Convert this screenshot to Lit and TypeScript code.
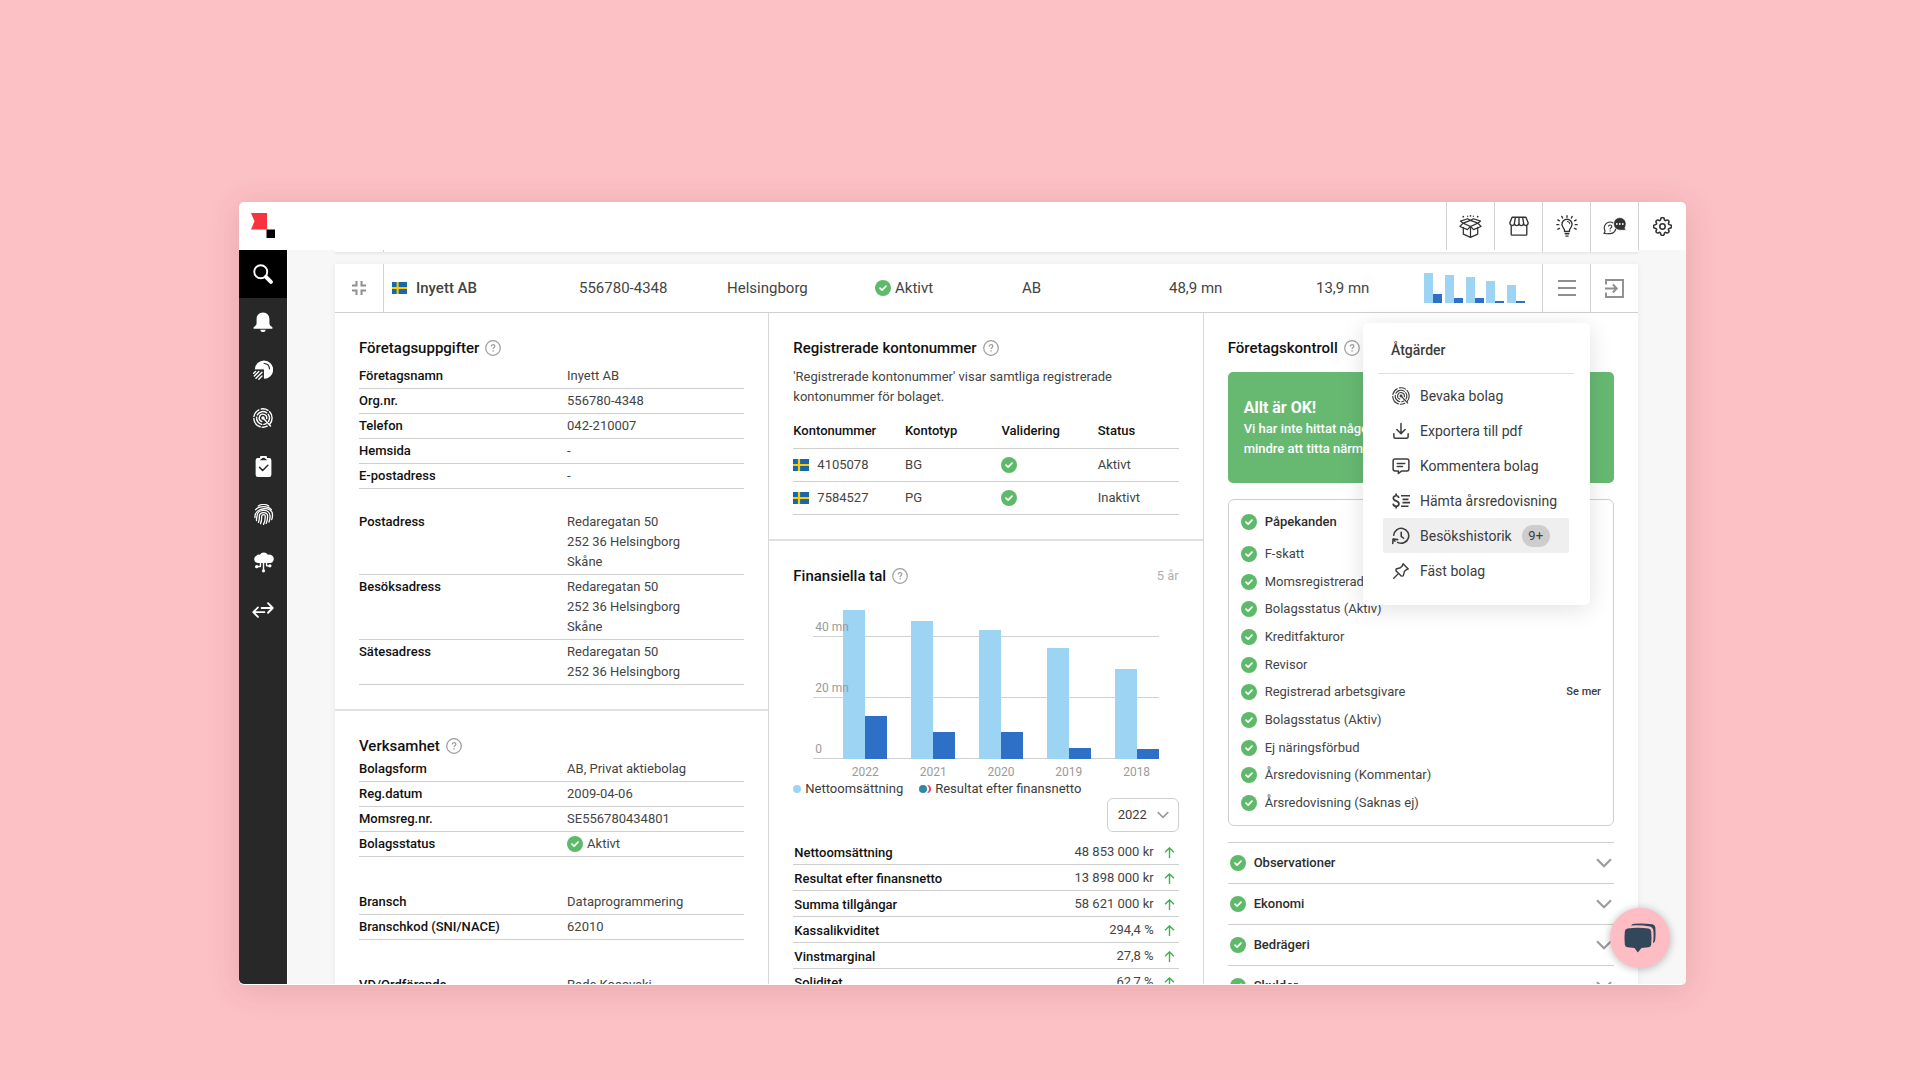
import { LitElement, html, css, svg, nothing, type TemplateResult } from "lit";
import { customElement, state } from "lit/decorators.js";
import { classMap } from "lit/directives/class-map.js";
import { styleMap } from "lit/directives/style-map.js";

/* ---------- data ---------- */

interface Year {
  year: number;
  revenue: number;
  result: number;
}

const YEARS: Year[] = [
  { year: 2022, revenue: 48.85, result: 13.9 },
  { year: 2021, revenue: 45.2, result: 8.6 },
  { year: 2020, revenue: 42.2, result: 8.8 },
  { year: 2019, revenue: 36.4, result: 3.5 },
  { year: 2018, revenue: 29.4, result: 3.2 },
];

const CHART_MAX = 52.5;
const TICKS = [
  { value: 40, label: "40 mn" },
  { value: 20, label: "20 mn" },
  { value: 0, label: "0" },
];

const COMPANY: [string, string][] = [
  ["Företagsnamn", "Inyett AB"],
  ["Org.nr.", "556780-4348"],
  ["Telefon", "042-210007"],
  ["Hemsida", "-"],
  ["E-postadress", "-"],
];

const ADDRESSES: [string, string[]][] = [
  ["Postadress", ["Redaregatan 50", "252 36 Helsingborg", "Skåne"]],
  ["Besöksadress", ["Redaregatan 50", "252 36 Helsingborg", "Skåne"]],
  ["Sätesadress", ["Redaregatan 50", "252 36 Helsingborg"]],
];

const ACCOUNTS = [
  { number: "4105078", type: "BG", status: "Aktivt" },
  { number: "7584527", type: "PG", status: "Inaktivt" },
];

const FIGURES: [string, string][] = [
  ["Nettoomsättning", "48 853 000 kr"],
  ["Resultat efter finansnetto", "13 898 000 kr"],
  ["Summa tillgångar", "58 621 000 kr"],
  ["Kassalikviditet", "294,4 %"],
  ["Vinstmarginal", "27,8 %"],
  ["Soliditet", "62,7 %"],
];

const CHECKS: { text: string; more?: boolean }[] = [
  { text: "F-skatt" },
  { text: "Momsregistrerad" },
  { text: "Bolagsstatus (Aktiv)" },
  { text: "Kreditfakturor" },
  { text: "Revisor" },
  { text: "Registrerad arbetsgivare", more: true },
  { text: "Bolagsstatus (Aktiv)" },
  { text: "Ej näringsförbud" },
  { text: "Årsredovisning (Kommentar)" },
  { text: "Årsredovisning (Saknas ej)" },
];

const SECTIONS = ["Observationer", "Ekonomi", "Bedrägeri", "Skulder"];

/* ---------- icons ---------- */

const icon = (size: number, body: TemplateResult, w = 24, h = 24) => html`<svg
  class="icon"
  width=${size}
  height=${Math.round((size * h) / w)}
  viewBox="0 0 ${w} ${h}"
  fill="none"
  stroke="currentColor"
  stroke-width="1.8"
  stroke-linecap="round"
  stroke-linejoin="round"
  aria-hidden="true"
>
  ${body}
</svg>`;

const logo = html`<svg width="24" height="25" viewBox="0 0 24 25" aria-hidden="true">
  <path d="M0 0H16V16.500H0L3.500 8.200Z" fill="#f8323f" />
  <rect x="15.500" y="16.500" width="8.500" height="8.500" fill="#000" />
</svg>`;

const check = html`<svg class="icon" width="16" height="16" viewBox="0 0 16 16" aria-hidden="true">
  <circle cx="8" cy="8" r="8" fill="#5fb96b" />
  <path d="M5 8.200L7.100 10.200L11 6.200" fill="none" stroke="#fff" stroke-width="1.700" stroke-linecap="round" stroke-linejoin="round" />
</svg>`;

const help = html`<svg class="icon" width="16" height="16" viewBox="0 0 16 16" fill="none" stroke="#9b9b9b" aria-hidden="true">
  <circle cx="8" cy="8" r="7.300" stroke-width="1.200" />
  <path d="M6.200 6.600C6.200 5.400 7 4.700 8 4.700C9.100 4.700 9.900 5.400 9.900 6.300C9.900 7.500 8.100 7.600 8.100 9.100" stroke-width="1.200" />
  <path d="M8.100 10.300V11.600" stroke-width="1.300" />
</svg>`;

const flag = (w: number) => html`<svg class="icon" width=${w} height="12" viewBox="0 0 16 12" preserveAspectRatio="none" role="img" aria-label="Sverige">
  <rect width="16" height="12" fill="#1668a8" />
  <path d="M0 6H16M6 0V12" stroke="#fdcb0a" stroke-width="2.200" fill="none" />
</svg>`;

const chevron = (w: number) => html`<svg class="icon" width=${w} height=${Math.round(w / 1.6)} viewBox="0 0 16 10" fill="none" stroke="#9c9c9c" stroke-width="2.200" aria-hidden="true">
  <path d="M1 1.200L8 8.200L15 1.200" />
</svg>`;

const arrowUp = html`<svg class="icon" width="11" height="11" viewBox="0 0 11 11" fill="none" stroke="#3fb24f" stroke-width="1.400" aria-hidden="true">
  <path d="M5.500 11V1M1 5.300L5.500 0.900L10 5.300" />
</svg>`;

const targetBody = (w: number) => svg`
  <g stroke-width=${w}>
    <path d="M7 2.300A11 11 0 0 0 1.100 10M1 12.500A11 11 0 0 0 8.500 22.500M11 23A11 11 0 0 0 17 21.800M10 1.200A11 11 0 0 1 18 2.800M20 4.600A11 11 0 0 1 20 19.500" />
    <path d="M16.500 5.800A7.700 7.700 0 0 0 5.200 8.300M4.300 11A7.700 7.700 0 0 0 10.500 19.600M13 19.600A7.700 7.700 0 0 0 15.800 18.700M18.300 7.600A7.700 7.700 0 0 1 18.600 16" />
    <path d="M10.500 16.200A4.500 4.500 0 1 1 16.400 12.800" />
    <path d="M12 12L21 21.600" />
    <circle cx="12" cy="12" r="1.200" />
  </g>`;

const icons = {
  search: icon(20, svg`<circle cx="9.300" cy="9.300" r="7.800" stroke-width="2.300" /><path d="M15.500 15.500L21.500 21.500" stroke-width="4.600" />`),
  bell: icon(20, svg`<g fill="currentColor" stroke="none">
    <path d="M12 0.500C7 0.500 4.300 4 4.300 8.700V13.500C4.300 15.500 3 16.800 0.700 18.300V20H23.300V18.300C21 16.800 19.700 15.500 19.700 13.500V8.700C19.700 4 17 0.500 12 0.500Z" />
    <path d="M8.800 21.200H15.200C15 22.900 13.700 24 12 24S9 22.900 8.800 21.200Z" /></g>`),
  pie: icon(20, svg`<g stroke="none"><path d="M2.200 11.500A11 11 0 1 1 13 22.500V11.500Z" fill="currentColor" /></g>
    <path d="M13.500 4.200C17 4.400 19.600 7 19.800 10.500" stroke="#282828" stroke-width="1.500" />
    <path d="M0 12.300H12.200V24" stroke="#282828" stroke-width="1.400" stroke-linejoin="miter" />
    <path d="M0.800 16L3 13.900M1.600 19.200L7 13.900M3.600 21.900L10.800 14.800M7 23.200L10.800 19.300" stroke-width="1.700" />`),
  target: icon(20, targetBody(1.700)),
  clipboard: icon(21, svg`<path d="M5.500 2.300H8A4 4 0 0 1 16 2.300H18.500A2.500 2.500 0 0 1 21 4.800V21.500A2.500 2.500 0 0 1 18.500 24H5.500A2.500 2.500 0 0 1 3 21.500V4.800A2.500 2.500 0 0 1 5.500 2.300Z" fill="currentColor" stroke="none" />
    <path d="M8 4.800H16C15.800 3.500 14.500 3.400 14 3C13.500 1.700 10.500 1.700 10 3C9.500 3.400 8.200 3.500 8 4.800Z" fill="#282828" stroke="none" />
    <path d="M7.500 13L11 16.500L17 10.500" stroke="#282828" stroke-width="1.700" />`),
  fingerprint: icon(21, svg`<g stroke-width="1.500">
    <path d="M6 2.300C9.500 0.200 14.500 0.200 18 2.300" />
    <path d="M3 6.500C7 1.900 17 1.900 21 6.500" />
    <path d="M2.300 15.500C0.800 3.500 23.200 1.500 22.300 13C22.200 15 22 16.500 21.400 17.800" />
    <path d="M4 19C3.600 17.500 4.500 16 4.600 13.500C5 5.300 19.300 5 19.500 13.500C19.500 16.500 19 18.800 18.300 20.600" />
    <path d="M6.200 21C7.500 18.500 7.300 16 7.300 13.500C7.700 8.500 16.500 8.500 16.700 13.500C16.800 17 16.300 19.800 15 22.300" />
    <path d="M8.600 22.500C10 19.500 10 16.500 10 13.800C10.200 11.600 13.900 11.600 14 13.800C14.100 17.300 13.500 20.500 12 23.300" /></g>`),
  cloud: icon(21, svg`<path d="M5 12.500A4.300 4.300 0 0 1 3.800 4.400A4 4 0 0 1 7.800 3A5.600 5.600 0 0 1 17 3.200A4.700 4.700 0 0 1 20.500 12.500Z" fill="currentColor" stroke="none" />
    <path d="M12 12V21M8.500 12V16.500H5M15.500 12V15.800H19" stroke-width="1.600" />
    <g fill="currentColor" stroke="none"><circle cx="12" cy="21.500" r="1.800" /><circle cx="4.200" cy="16.800" r="1.900" /><circle cx="19.300" cy="15.800" r="1.900" /></g>`),
  swap: icon(22, svg`<g stroke-width="2"><path d="M10.500 9.800H22.500M17.500 4.600L22.600 9.800L17.500 15" /><path d="M13.500 14.400H1.500M6.500 9.200L1.400 14.400L6.500 19.600" /></g>`),
  box: icon(23, svg`<g stroke-width="1.300">
    <path d="M4.500 12.800V20L12 23.300L19.500 20V12.800M12 13.300V23" />
    <path d="M4.300 8.500L12 5.600L19.700 8.500L12 12L4.300 8.500L1 12L8.800 15.200L12 12L15.200 15.200L23 12L19.700 8.500M4.300 8.500L1.500 6.300L9 3.900L12 5.600L15 3.900L22.500 6.300L19.700 8.500" /></g>
    <g fill="currentColor" stroke="none"><circle cx="4.500" cy="1.800" r="0.900" /><circle cx="9" cy="1.300" r="0.700" /><circle cx="12" cy="0.900" r="0.900" /><circle cx="15" cy="1.300" r="0.700" /><circle cx="19.500" cy="1.800" r="0.900" /></g>`),
  store: icon(22, svg`<g stroke-width="1.500"><path d="M3.500 12V21A1 1 0 0 0 4.500 22H19.500A1 1 0 0 0 20.500 21V12" />
    <path d="M4.500 2.500H19.500L22 8.500C22 12 17.300 12.500 17 9C16.700 12.500 12.200 12.500 12 9C11.800 12.500 7.300 12.500 7 9C6.700 12.500 2 12 2 8.500ZM8 2.500L7 9M12 2.500V9M16 2.500L17 9" /></g>`),
  bulb: icon(22, svg`<g stroke-width="1.500"><path d="M9.300 18V16.500C9.300 15 6.500 13.500 6.500 10.200A5.500 5.500 0 0 1 17.500 10.200C17.500 13.500 14.700 15 14.700 16.500V18ZM10 20.500H14M10.800 23H13.200" />
    <path d="M12.500 7A3 3 0 0 1 15 9.500" stroke-width="1.100" />
    <path d="M12 0.800V2.400M6.300 1.500L7.200 3.300M17.700 1.500L16.800 3.300M2 5.300L3.800 6.300M22 5.300L20.200 6.300M0.900 10.500H3M23.100 10.500H21M2 15.500L3.800 14.600M22 15.500L20.200 14.600" /></g>`),
  chats: html`<svg class="icon" width="24" height="18" viewBox="0 0 24 18" fill="none" stroke="currentColor" stroke-width="1.100" stroke-linejoin="round" aria-hidden="true">
    <path d="M0.800 16.300C2.300 15.600 2.200 14.300 1.700 13A5.800 5.800 0 1 1 7.200 16.600C5 16.600 2.500 17 0.800 16.300Z" />
    <path d="M5.500 9.600C5.500 7.400 8.800 7.400 8.800 9.500C8.800 10.900 7.100 11 7.100 12.500M7.100 13.600V14.600" />
    <path d="M16.800 0.500A6.400 6.400 0 1 0 17 13.300H23.500C22 12.500 22 11 22.300 10A6.400 6.400 0 0 0 16.800 0.500Z" fill="currentColor" stroke="#fff" stroke-width="0.800" />
    <g fill="#fff" stroke="none"><circle cx="13.800" cy="7" r="0.900" /><circle cx="16.800" cy="7" r="0.900" /><circle cx="19.800" cy="7" r="0.900" /></g>
  </svg>`,
  gear: icon(19, svg`<g stroke-width="2"><circle cx="12" cy="12" r="3.400" />
    <path d="M9.800 2.800A2.200 2.200 0 0 1 14.200 2.800C14.500 4.600 15.600 5 17.100 4A2.200 2.200 0 0 1 20 6.900C19 8.400 19.400 9.500 21.200 9.800A2.200 2.200 0 0 1 21.200 14.200C19.400 14.500 19 15.600 20 17.100A2.200 2.200 0 0 1 17.100 20C15.600 19 14.500 19.400 14.200 21.200A2.200 2.200 0 0 1 9.800 21.200C9.500 19.400 8.400 19 6.900 20A2.200 2.200 0 0 1 4 17.100C5 15.600 4.600 14.500 2.800 14.200A2.200 2.200 0 0 1 2.800 9.800C4.600 9.500 5 8.400 4 6.900A2.200 2.200 0 0 1 6.900 4C8.400 5 9.500 4.600 9.800 2.800Z" /></g>`),
  collapse: html`<svg class="icon" width="14" height="14" viewBox="0 0 14 14" fill="none" stroke="#8f8f8f" stroke-width="2" aria-hidden="true">
    <path d="M4.500 0V4.500H0M9.500 0V4.500H14M4.500 14V9.500H0M9.500 14V9.500H14" />
  </svg>`,
  burger: html`<svg class="icon" width="18" height="16" viewBox="0 0 18 16" stroke="#8f8f8f" stroke-width="1.800" aria-hidden="true">
    <path d="M0 1H18M0 8H18M0 15H18" />
  </svg>`,
  exit: html`<svg class="icon" width="19" height="19" viewBox="0 0 19 19" fill="none" stroke="#8f8f8f" stroke-width="1.900" aria-hidden="true">
    <path d="M1 5.500V1H18V18H1V13.500M0 9.500H11.500M7.800 5.500L11.800 9.500L7.800 13.500" />
  </svg>`,
  download: icon(18, svg`<path d="M12 2V15M6.500 10L12 15.500L17.500 10M2.500 15.500V19.500A2 2 0 0 0 4.500 21.500H19.500A2 2 0 0 0 21.500 19.500V15.500" stroke-width="2" />`),
  comment: icon(18, svg`<path d="M4 2.500H20A2.500 2.500 0 0 1 22.500 5V16A2.500 2.500 0 0 1 20 18.500H13L8.500 22V18.500H4A2.500 2.500 0 0 1 1.500 16V5A2.500 2.500 0 0 1 4 2.500ZM7 8.500H17M7 12.800H14" stroke-width="2" />`),
  report: icon(18, svg`<g stroke-width="2.300" stroke-linecap="butt"><path d="M9 8C8.800 5.800 7.500 5 5.500 5S1.800 6 1.800 8.200C1.800 13 9.200 10.800 9.200 15.700C9.200 17.800 7.500 19 5.500 19S1.700 18 1.500 15.500M5.500 2V5M5.500 19V22" />
    <path d="M12 5H24M14 9.700H22M14 14.300H24M12 19H22" /></g>`),
  history: icon(18, svg`<g stroke-width="2.100">
    <path d="M2.300 11A10 10 0 1 1 7.500 20.500" /><path d="M12.300 7V12.500L15.500 15" /><path d="M1 22L1.500 16L7.500 16.800" /><path d="M1.800 16.500L4 19" /></g>`),
  pin: icon(18, svg`<path d="M14.800 2.300L21.700 9.200L19 10.300L16.500 12.800L15 18.500L12.300 18.800L5.300 11.800L5.500 9.300L11.200 7.700L13.700 5.200ZM8.500 15.500L2.300 21.800" stroke-width="1.900" />`),
  targetSmall: icon(18, targetBody(1.500)),
  chatBubble: html`<svg class="icon" width="32" height="30" viewBox="0 0 32 30" fill="#33475b" aria-hidden="true">
    <path d="M3.500 5.500Q14 4 24.500 5.500Q27 6 27.200 8.500Q27.800 15 27.200 21.500Q27 24 24.500 24.300L17.500 25L13.800 29.500L10.500 25L3.500 24.300Q1 24 0.800 21.500Q0.200 15 0.800 8.500Q1 6 3.500 5.500Z" />
    <path d="M7 2.500Q8 1 10 0.700Q19 -0.100 28.500 1.200Q31 1.700 31.300 4.200Q31.900 11 31.200 17Q31 19.500 29 20.200Q30 13 29.200 6.700Q28.800 4 26 3.400Q17 2 7 2.500Z" />
  </svg>`,
};

const NAV: { label: string; glyph: TemplateResult }[] = [
  { label: "Sök", glyph: icons.search },
  { label: "Notiser", glyph: icons.bell },
  { label: "Analys", glyph: icons.pie },
  { label: "Bevakning", glyph: icons.target },
  { label: "Uppgifter", glyph: icons.clipboard },
  { label: "Identitet", glyph: icons.fingerprint },
  { label: "Integrationer", glyph: icons.cloud },
  { label: "Växla", glyph: icons.swap },
];

const TOOLS: { label: string; glyph: TemplateResult }[] = [
  { label: "Nyheter", glyph: icons.box },
  { label: "Butik", glyph: icons.store },
  { label: "Tips", glyph: icons.bulb },
  { label: "Support", glyph: icons.chats },
  { label: "Inställningar", glyph: icons.gear },
];

const ACTIONS: { label: string; glyph: TemplateResult; badge?: string }[] = [
  { label: "Bevaka bolag", glyph: icons.targetSmall },
  { label: "Exportera till pdf", glyph: icons.download },
  { label: "Kommentera bolag", glyph: icons.comment },
  { label: "Hämta årsredovisning", glyph: icons.report },
  { label: "Besökshistorik", glyph: icons.history, badge: "9+" },
  { label: "Fäst bolag", glyph: icons.pin },
];

const base = css`
  *,
  :host {
    box-sizing: border-box;
  }
  :host {
    font-family: Roboto, "Liberation Sans", sans-serif;
  }
  button {
    font: inherit;
    color: inherit;
    background: none;
    border: 0;
    padding: 0;
    margin: 0;
    cursor: pointer;
  }
  .icon {
    display: block;
    flex: none;
  }
`;

/* ---------- side navigation ---------- */

@customElement("side-nav")
export class SideNav extends LitElement {
  @state() private active = 0;

  static styles = [
    base,
    css`
      :host {
        display: block;
        flex: none;
        width: 49px;
        background: #282828;
        border-right: 1px solid #fff;
        border-bottom-left-radius: 5px;
      }
      .nav {
        display: flex;
        flex-direction: column;
      }
      .item {
        display: grid;
        place-items: center;
        height: 48px;
        color: #fff;
      }
      .item.active {
        background: #000;
      }
    `,
  ];

  render() {
    return html`<nav class="nav" aria-label="Huvudmeny">
      ${NAV.map(
        (n, i) => html`<button
          class=${classMap({ item: true, active: i === this.active })}
          aria-label=${n.label}
          @click=${() => (this.active = i)}
        >
          ${n.glyph}
        </button>`
      )}
    </nav>`;
  }
}

/* ---------- actions menu ---------- */

@customElement("actions-menu")
export class ActionsMenu extends LitElement {
  static styles = [
    base,
    css`
      :host {
        display: block;
        background: #fff;
        border-radius: 5px;
        box-shadow: 0 4px 24px rgba(0, 0, 0, 0.12);
        padding: 15px 16px 17px 15px;
        color: #3c3c3c;
      }
      .title {
        margin: 0;
        padding: 0 13px 11px;
        font-size: 14px;
        line-height: 24px;
        font-weight: 500;
        border-bottom: 1px solid #dedede;
      }
      .list {
        list-style: none;
        margin: 0;
        padding: 4px 5px 0;
      }
      .action {
        display: flex;
        align-items: center;
        gap: 10px;
        width: 100%;
        height: 35px;
        padding: 0 9px;
        font-size: 14px;
        white-space: nowrap;
        border-radius: 2px;
      }
      .action.hover {
        background: #efefef;
      }
      .badge {
        display: grid;
        place-items: center;
        min-width: 28px;
        height: 22px;
        border-radius: 11px;
        background: #cdcdcd;
        font-size: 13px;
      }
    `,
  ];

  render() {
    return html`<h2 class="title">Åtgärder</h2>
      <ul class="list">
        ${ACTIONS.map(
          (a) => html`<li>
            <button class=${classMap({ action: true, hover: !!a.badge })}>
              ${a.glyph}<span>${a.label}</span>
              ${a.badge ? html`<span class="badge">${a.badge}</span>` : nothing}
            </button>
          </li>`
        )}
      </ul>`;
  }
}

/* ---------- company summary row ---------- */

@customElement("company-row")
export class CompanyRow extends LitElement {
  @state() private open = true;

  static styles = [
    base,
    css`
      :host {
        display: flex;
        position: relative;
        z-index: 2;
        height: 49px;
        background: #fff;
        border-bottom: 1px solid #cfcfcf;
        font-size: 15px;
        line-height: 20px;
        color: #444;
      }
      .cell {
        display: grid;
        place-items: center;
        width: 49px;
        flex: none;
        border-right: 1px solid #d2d2d2;
      }
      .tail {
        position: relative;
        display: flex;
        width: 48px;
        flex: none;
        border-left: 1px solid #d2d2d2;
      }
      .tail button {
        flex: 1;
        display: grid;
        place-items: center;
      }
      .fields {
        flex: 1;
        display: grid;
        grid-template-columns: 187fr 148fr 148fr 147fr 147fr 147fr 108fr 118fr;
        align-items: center;
        padding-left: 8px;
      }
      .field {
        display: flex;
        align-items: center;
        gap: 4px;
        white-space: nowrap;
      }
      .name {
        gap: 9px;
        font-weight: 500;
      }
      .mini {
        display: flex;
        align-items: flex-end;
        justify-content: space-between;
        width: 101px;
        height: 30px;
      }
      .pair {
        display: flex;
        align-items: flex-end;
        height: 100%;
      }
      .light,
      .dark {
        width: 9px;
        background: #9dd3f3;
      }
      .dark {
        background: #2e6fc7;
      }
      .popup {
        position: absolute;
        top: 59px;
        right: 0;
        width: 227px;
      }
    `,
  ];

  render() {
    const pct = (v: number) => styleMap({ height: `${(v / YEARS[0].revenue) * 100}%` });
    return html`
      <button class="cell" aria-label="Fäll ihop">${icons.collapse}</button>
      <div class="fields">
        <span class="field name">${flag(15)}Inyett AB</span>
        <span class="field">556780-4348</span>
        <span class="field">Helsingborg</span>
        <span class="field">${check}Aktivt</span>
        <span class="field">AB</span>
        <span class="field">48,9 mn</span>
        <span class="field">13,9 mn</span>
        <div class="mini" aria-hidden="true">
          ${YEARS.map(
            (y) => html`<div class="pair">
              <div class="light" style=${pct(y.revenue)}></div>
              <div class="dark" style=${pct(y.result)}></div>
            </div>`
          )}
        </div>
      </div>
      <div class="tail">
        <button aria-label="Åtgärder" aria-expanded=${this.open} @click=${() => (this.open = !this.open)}>
          ${icons.burger}
        </button>
        ${this.open ? html`<actions-menu class="popup"></actions-menu>` : nothing}
      </div>
      <div class="tail"><button aria-label="Öppna">${icons.exit}</button></div>
    `;
  }
}

/* ---------- finance chart ---------- */

@customElement("finance-chart")
export class FinanceChart extends LitElement {
  static styles = [
    base,
    css`
      :host {
        display: block;
        color: #9a9a9a;
        font-size: 12px;
      }
      .frame {
        margin: 0 20px;
      }
      .plot {
        position: relative;
        height: 160px;
      }
      .tick {
        position: absolute;
        left: 0;
        right: 0;
        border-bottom: 1px solid #d0d0d0;
      }
      .tick-label {
        position: absolute;
        z-index: 2;
        left: 2px;
        line-height: 14px;
        padding-bottom: 3px;
      }
      .bars,
      .years {
        display: flex;
        justify-content: space-between;
        padding-left: 30px;
      }
      .bars {
        position: relative;
        z-index: 1;
        height: 100%;
      }
      .pair {
        display: flex;
        align-items: flex-end;
        width: 44px;
      }
      .light,
      .dark {
        flex: 1;
        background: #9dd3f3;
      }
      .dark {
        background: #2e6fc7;
      }
      .year {
        width: 44px;
        text-align: center;
        line-height: 15px;
        padding-top: 6px;
      }
      .legend {
        display: flex;
        gap: 16px;
        color: #3c3c3c;
        font-size: 13px;
        line-height: 18px;
      }
      .key {
        display: flex;
        align-items: center;
        gap: 4px;
      }
    `,
  ];

  render() {
    const pct = (v: number) => `${(v / CHART_MAX) * 100}%`;
    return html`
      <div class="frame">
        <div class="plot">
          ${TICKS.map(
            (t) => html`<div class="tick" style=${styleMap({ bottom: pct(t.value) })}></div>
              <div class="tick-label" style=${styleMap({ bottom: pct(t.value) })}>${t.label}</div>`
          )}
          <div class="bars">
            ${YEARS.map(
              (y) => html`<div class="pair">
                <div class="light" style=${styleMap({ height: pct(y.revenue) })}></div>
                <div class="dark" style=${styleMap({ height: pct(y.result) })}></div>
              </div>`
            )}
          </div>
        </div>
        <div class="years">${YEARS.map((y) => html`<span class="year">${y.year}</span>`)}</div>
      </div>
      <div class="legend">
        <span class="key"
          ><svg class="icon" width="8" height="8" aria-hidden="true"><circle cx="4" cy="4" r="4" fill="#9dd3f3" /></svg
          >Nettoomsättning</span
        >
        <span class="key"
          ><svg class="icon" width="12" height="8" aria-hidden="true">
            <circle cx="8" cy="4" r="4" fill="#e2485f" />
            <circle cx="5" cy="4" r="5" fill="#fff" />
            <circle cx="4" cy="4" r="4" fill="#2f8aa8" /></svg
          >Resultat efter finansnetto</span
        >
      </div>
    `;
  }
}

/* ---------- company details ---------- */

@customElement("company-details")
export class CompanyDetails extends LitElement {
  static styles = [
    base,
    css`
      :host {
        display: grid;
        grid-template-columns: repeat(3, 1fr);
        background: #fff;
        font-size: 13px;
        line-height: 20px;
        color: #444;
      }
      .col {
        border-right: 1px solid #d8d8d8;
      }
      .col:last-child {
        border-right: 0;
      }
      .panel {
        padding: 24px;
      }
      .panel + .panel {
        border-top: 2px solid #e0e0e0;
      }
      .head {
        display: flex;
        align-items: center;
        gap: 6px;
        margin: 0;
        font-size: 15px;
        line-height: 22px;
        font-weight: 500;
        color: #111;
      }
      .head.spaced {
        margin-bottom: 5px;
      }
      .range {
        margin-left: auto;
        font-size: 13px;
        font-weight: 400;
        color: #b0b0b0;
      }
      .facts {
        margin: 0;
      }
      .facts + .facts {
        margin-top: 33px;
      }
      .facts + .facts.near {
        margin-top: 21px;
      }
      .fact {
        display: grid;
        grid-template-columns: 54fr 46fr;
        padding: 2px 0;
        border-bottom: 1px solid #cfcfcf;
      }
      dt {
        font-weight: 500;
        color: #111;
      }
      dd {
        margin: 0;
      }
      .line {
        display: block;
      }
      .ok {
        display: flex;
        align-items: center;
        gap: 4px;
      }
      .text {
        margin: 8px 0;
      }
      table {
        width: 100%;
        border-collapse: collapse;
      }
      .accounts {
        table-layout: fixed;
      }
      .accounts th,
      .accounts td {
        height: 33px;
        padding: 0;
        text-align: left;
        border-bottom: 1px solid #cfcfcf;
      }
      th {
        font-weight: 500;
        color: #111;
      }
      .w-num {
        width: 29%;
      }
      .w-mid {
        width: 25%;
      }
      .account {
        display: flex;
        align-items: center;
        gap: 8px;
      }
      .chart {
        margin-top: 12px;
      }
      .picker {
        display: flex;
        justify-content: flex-end;
      }
      .select {
        display: grid;
        align-items: center;
        width: 72px;
      }
      .select > * {
        grid-area: 1 / 1;
      }
      .select .icon {
        justify-self: end;
        margin-right: 10px;
        pointer-events: none;
      }
      select {
        appearance: none;
        height: 34px;
        width: 100%;
        padding: 0 10px;
        font: inherit;
        color: #3c3c3c;
        background: #fff;
        border: 1px solid #cfcfcf;
        border-radius: 6px;
      }
      .figures {
        margin-top: 7px;
      }
      .figures th,
      .figures td {
        height: 26px;
        padding: 0 0 1px 1px;
        border-bottom: 1px solid #cfcfcf;
        text-align: left;
        vertical-align: bottom;
      }
      .figures td {
        padding-bottom: 2px;
        text-align: right;
      }
      .figures .trend {
        width: 25px;
        padding: 2px 4px 0 10px;
        vertical-align: middle;
      }
      .banner {
        margin-top: 13px;
        padding: 24px 16px;
        border-radius: 5px;
        background: #67b972;
        color: #fff;
        font-weight: 500;
      }
      .banner strong {
        display: block;
        font-size: 16px;
        line-height: 23px;
        font-weight: 700;
      }
      .banner p {
        margin: 0;
        white-space: pre-line;
      }
      .box {
        margin-top: 16px;
        padding: 12px;
        border: 1px solid #cfcfcf;
        border-radius: 6px;
      }
      .checks {
        display: flex;
        flex-direction: column;
        justify-content: space-between;
        min-height: 269px;
        list-style: none;
        margin: 12px 0 0;
        padding: 0;
      }
      .check {
        display: flex;
        align-items: center;
        gap: 8px;
      }
      .check a {
        margin-left: auto;
        font-size: 11px;
        font-weight: 500;
        color: #3c3c3c;
        text-decoration: none;
      }
      .title {
        margin: 0;
        font-size: 13px;
        font-weight: 500;
        color: #2d2d2d;
      }
      .groups {
        margin-top: 16px;
        border-top: 1px solid #cfcfcf;
      }
      .group {
        display: flex;
        align-items: center;
        gap: 8px;
        width: 100%;
        height: 41px;
        padding: 0 2px;
        border-bottom: 1px solid #cfcfcf;
        font-weight: 500;
        color: #2d2d2d;
      }
      .group .icon:last-child {
        margin-left: auto;
      }
    `,
  ];

  private fact(label: string, value: unknown) {
    return html`<div class="fact"><dt>${label}</dt><dd>${value}</dd></div>`;
  }

  render() {
    return html`
      <div class="col">
        <section class="panel">
          <h2 class="head spaced">Företagsuppgifter ${help}</h2>
          <dl class="facts">${COMPANY.map(([k, v]) => this.fact(k, v))}</dl>
          <dl class="facts near">
            ${ADDRESSES.map(([k, v]) => this.fact(k, v.map((l) => html`<span class="line">${l}</span>`)))}
          </dl>
        </section>
        <section class="panel">
          <h2 class="head">Verksamhet ${help}</h2>
          <dl class="facts">
            ${this.fact("Bolagsform", "AB, Privat aktiebolag")} ${this.fact("Reg.datum", "2009-04-06")}
            ${this.fact("Momsreg.nr.", "SE556780434801")}
            ${this.fact("Bolagsstatus", html`<span class="ok">${check}Aktivt</span>`)}
          </dl>
          <dl class="facts">
            ${this.fact("Bransch", "Dataprogrammering")} ${this.fact("Branschkod (SNI/NACE)", "62010")}
          </dl>
          <dl class="facts">${this.fact("VD/Ordförande", "Rade Kosovski")}</dl>
        </section>
      </div>

      <div class="col">
        <section class="panel">
          <h2 class="head">Registrerade kontonummer ${help}</h2>
          <p class="text">'Registrerade kontonummer' visar samtliga registrerade kontonummer för bolaget.</p>
          <table class="accounts">
            <thead>
              <tr>
                <th class="w-num">Kontonummer</th>
                <th class="w-mid">Kontotyp</th>
                <th class="w-mid">Validering</th>
                <th>Status</th>
              </tr>
            </thead>
            <tbody>
              ${ACCOUNTS.map(
                (a) => html`<tr>
                  <td><span class="account">${flag(16)}${a.number}</span></td>
                  <td>${a.type}</td>
                  <td>${check}</td>
                  <td>${a.status}</td>
                </tr>`
              )}
            </tbody>
          </table>
        </section>
        <section class="panel">
          <h2 class="head">Finansiella tal ${help}<span class="range">5 år</span></h2>
          <finance-chart class="chart"></finance-chart>
          <div class="picker">
            <label class="select">
              <select aria-label="År">
                ${YEARS.map((y) => html`<option>${y.year}</option>`)}
              </select>
              ${chevron(12)}
            </label>
          </div>
          <table class="figures">
            <tbody>
              ${FIGURES.map(
                ([k, v]) => html`<tr>
                  <th scope="row">${k}</th>
                  <td>${v}</td>
                  <td class="trend">${arrowUp}</td>
                </tr>`
              )}
            </tbody>
          </table>
        </section>
      </div>

      <div class="col">
        <section class="panel">
          <h2 class="head">Företagskontroll ${help}</h2>
          <div class="banner">
            <strong>Allt är OK!</strong>
            <p>Vi har inte hittat något på bolaget som ger oss
mindre att titta närmare på.</p>
          </div>
          <div class="box">
            <h3 class="title check">${check}Påpekanden</h3>
            <ul class="checks">
              ${CHECKS.map(
                (c) => html`<li class="check">
                  ${check}<span>${c.text}</span>${c.more ? html`<a href="#mer">Se mer</a>` : nothing}
                </li>`
              )}
            </ul>
          </div>
          <div class="groups">
            ${SECTIONS.map(
              (s) => html`<button class="group" aria-expanded="false">${check}<span>${s}</span>${chevron(16)}</button>`
            )}
          </div>
        </section>
      </div>
    `;
  }
}

/* ---------- page ---------- */

@customElement("app-root")
export class AppRoot extends LitElement {
  static styles = [
    base,
    css`
      :host {
        display: flex;
        height: 100vh;
        padding: 202px 234px 95px 239px;
        background: #fcc1c5;
      }
      .window {
        position: relative;
        flex: 1;
        min-width: 0;
        display: flex;
        flex-direction: column;
        padding-bottom: 1px;
        background: #fff;
        border-radius: 5px;
        overflow: hidden;
        box-shadow: 0 4px 32px rgba(120, 40, 50, 0.16);
      }
      .top {
        display: flex;
        justify-content: space-between;
        flex: none;
        height: 48px;
      }
      .logo {
        padding: 11px 12px;
      }
      .tools {
        display: flex;
      }
      .tool {
        display: grid;
        place-items: center;
        width: 48px;
        border-left: 1px solid #d2d2d2;
        color: #333;
      }
      .body {
        flex: 1;
        min-height: 0;
        display: flex;
      }
      .main {
        flex: 1;
        min-width: 0;
        padding: 0 48px 0 47px;
        background: #f7f7f7;
        overflow: hidden;
      }
      .previous {
        display: flex;
        justify-content: space-between;
        height: 2px;
        margin-bottom: 12px;
        background: #fff;
        box-shadow: 0 1px 3px rgba(0, 0, 0, 0.12);
      }
      .stub {
        width: 49px;
        border-right: 1px solid #d2d2d2;
      }
      .stubs {
        width: 96px;
        display: grid;
        grid-template-columns: 1fr 1fr;
      }
      .stubs .stub {
        width: auto;
        border-right: 0;
        border-left: 1px solid #d2d2d2;
      }
      .card {
        box-shadow: 0 1px 6px rgba(0, 0, 0, 0.07);
      }
      .chat {
        position: absolute;
        right: 16px;
        bottom: 17px;
        z-index: 3;
        display: grid;
        place-items: center;
        width: 60px;
        height: 60px;
        border-radius: 50%;
        background: #fdbdc3;
        box-shadow: 0 1px 8px rgba(0, 0, 0, 0.28);
      }
    `,
  ];

  render() {
    return html`
      <div class="window">
        <header class="top">
          <div class="logo">${logo}</div>
          <div class="tools">
            ${TOOLS.map((t) => html`<button class="tool" aria-label=${t.label}>${t.glyph}</button>`)}
          </div>
        </header>
        <div class="body">
          <side-nav></side-nav>
          <main class="main">
            <div class="previous">
              <div class="stub"></div>
              <div class="stubs">
                <div class="stub"></div>
                <div class="stub"></div>
              </div>
            </div>
            <article class="card">
              <company-row></company-row>
              <company-details></company-details>
            </article>
          </main>
        </div>
        <button class="chat" aria-label="Chatt">${icons.chatBubble}</button>
      </div>
    `;
  }
}
